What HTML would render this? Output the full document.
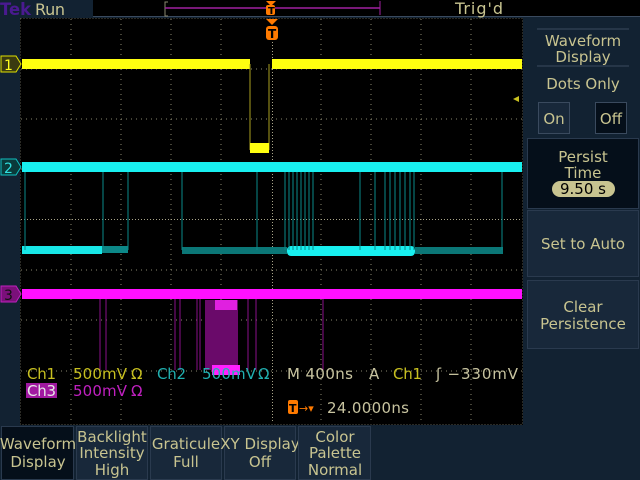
<!DOCTYPE html>
<html><head><style>
body{margin:0;width:640px;height:480px;background:#122232;overflow:hidden;font-family:"DejaVu Sans","Liberation Sans",sans-serif;}
svg{position:absolute;left:0;top:0}
.t{font-family:"DejaVu Sans","Liberation Sans",sans-serif;}
</style></head><body>
<svg width="640" height="480" viewBox="0 0 640 480">
<rect x="93" y="0" width="547" height="16" fill="#000"/>
<line x1="93" y1="16.5" x2="640" y2="16.5" stroke="#3a4a5e"/>
<text x="0" y="15" font-size="17" font-weight="bold" fill="#4a1a90" class="t" textLength="31" lengthAdjust="spacingAndGlyphs">Tek</text>
<text x="35" y="15" font-size="16" fill="#c8c490" class="t" textLength="30">Run</text>
<text x="455" y="14" font-size="16" fill="#c8c490" class="t" textLength="48">Trig'd</text>
<path d="M168 2 h-3 v14 h3" stroke="#8a8870" fill="none"/>
<line x1="165" y1="8" x2="380" y2="8" stroke="#a020a0" stroke-width="1.5"/>
<line x1="380" y1="1" x2="380" y2="15" stroke="#a020a0"/>
<polygon points="266,1 276,1 271,6" fill="#ff7a00"/>
<rect x="266" y="5" width="9" height="10" rx="2" fill="#ff7a00"/>
<text x="268" y="14" font-size="10" font-weight="bold" fill="#000">T</text>
<rect x="20" y="18" width="503" height="407" fill="#000"/>
<rect x="20.5" y="18.5" width="502" height="406" fill="none" stroke="#55554a" stroke-dasharray="1 2"/>
<g stroke="#8a8870" stroke-dasharray="1 4" stroke-width="1">
<line x1="71" y1="19" x2="71" y2="423"/><line x1="121" y1="19" x2="121" y2="423"/><line x1="171" y1="19" x2="171" y2="423"/><line x1="221" y1="19" x2="221" y2="423"/>
<line x1="321" y1="19" x2="321" y2="423"/><line x1="371" y1="19" x2="371" y2="423"/><line x1="421" y1="19" x2="421" y2="423"/><line x1="471" y1="19" x2="471" y2="423"/>
<line x1="21" y1="69" x2="522" y2="69"/><line x1="21" y1="119" x2="522" y2="119"/><line x1="21" y1="169" x2="522" y2="169"/>
<line x1="21" y1="270" x2="522" y2="270"/><line x1="21" y1="320" x2="522" y2="320"/><line x1="21" y1="371" x2="522" y2="371"/>
</g>
<g stroke="#a8a488" stroke-dasharray="1 2">
<line x1="272.5" y1="30" x2="272.5" y2="423"/><line x1="21" y1="219.5" x2="522" y2="219.5"/>
</g>
<polygon points="266,19 278,19 272,25" fill="#ff7a00"/>
<rect x="266" y="26" width="12" height="14" rx="3" fill="#ff7a00"/>
<text x="268" y="38" font-size="12" font-weight="bold" fill="#000">T</text>
<rect x="22" y="59" width="228" height="10" fill="#ffff10"/>
<rect x="272" y="59" width="250" height="10" fill="#ffff10"/>
<line x1="250" y1="64" x2="250" y2="150" stroke="#aaa020"/>
<line x1="269" y1="64" x2="269" y2="150" stroke="#aaa020"/>
<rect x="250" y="143" width="19" height="10" fill="#ffff10"/>
<rect x="22" y="162" width="500" height="10" fill="#18f0f0"/>
<rect x="22" y="246" width="80" height="8" fill="#18e8e8"/>
<rect x="102" y="246" width="26" height="7" fill="#0c8888"/>
<rect x="182" y="247" width="105" height="7" fill="#0b7777"/>
<rect x="287" y="246" width="128" height="10" rx="4" fill="#18f0f0"/>
<rect x="415" y="247" width="88" height="7" fill="#0b7777"/>
<g stroke="#0a8a8a" stroke-width="1">
<line x1="25" y1="172" x2="25" y2="250"/><line x1="103" y1="172" x2="103" y2="250"/><line x1="128" y1="172" x2="128" y2="250"/><line x1="182" y1="172" x2="182" y2="250"/><line x1="257" y1="172" x2="257" y2="250"/><line x1="502" y1="172" x2="502" y2="250"/>
<line x1="285" y1="172" x2="285" y2="250"/><line x1="289" y1="172" x2="289" y2="250"/><line x1="293" y1="172" x2="293" y2="250"/><line x1="297" y1="172" x2="297" y2="250"/><line x1="301" y1="172" x2="301" y2="250"/><line x1="305" y1="172" x2="305" y2="250"/><line x1="309" y1="172" x2="309" y2="250"/><line x1="313" y1="172" x2="313" y2="250"/>
<line x1="360" y1="172" x2="360" y2="250"/><line x1="375" y1="172" x2="375" y2="250"/><line x1="385" y1="172" x2="385" y2="250"/><line x1="390" y1="172" x2="390" y2="250"/><line x1="395" y1="172" x2="395" y2="250"/><line x1="400" y1="172" x2="400" y2="250"/><line x1="405" y1="172" x2="405" y2="250"/><line x1="410" y1="172" x2="410" y2="250"/><line x1="414" y1="172" x2="414" y2="250"/>
</g>
<rect x="22" y="289" width="500" height="10" fill="#ff10ff"/>
<g stroke="#8a108a">
<line x1="100" y1="299" x2="100" y2="370"/><line x1="106" y1="299" x2="106" y2="370"/><line x1="175" y1="299" x2="175" y2="370"/><line x1="180" y1="299" x2="180" y2="370"/><line x1="197" y1="299" x2="197" y2="370"/><line x1="200" y1="299" x2="200" y2="370"/><line x1="248" y1="299" x2="248" y2="370"/><line x1="256" y1="299" x2="256" y2="370"/><line x1="323" y1="299" x2="323" y2="370"/>
</g>
<rect x="205" y="300" width="33" height="70" fill="#6a0a6a"/>
<rect x="215" y="300" width="22" height="10" fill="#e020e0"/>
<rect x="212" y="365" width="28" height="10" fill="#ff20ff"/>
<path d="M1 56 h15 l5 8 l-5 8 h-15z" fill="#3a3a10" stroke="#e0e000"/>
<text x="4" y="70" font-size="14" fill="#ffff20">1</text>
<path d="M1 159 h15 l5 8 l-5 8 h-15z" fill="#0a3a3a" stroke="#10c0c0"/>
<text x="4" y="173" font-size="14" fill="#30e0e0">2</text>
<path d="M1 286 h15 l5 8 l-5 8 h-15z" fill="#7a107a" stroke="#c020c0"/>
<text x="4" y="300" font-size="14" fill="#101010">3</text>
<g font-size="15" class="t">
<text x="27" y="379" fill="#c8c020" textLength="29">Ch1</text><text x="73" y="379" fill="#c8c020" textLength="54">500mV</text><text x="131" y="379" fill="#c8c020">Ω</text>
<text x="157" y="379" fill="#20b0b0" textLength="29">Ch2</text><text x="202" y="379" fill="#20b0b0" textLength="54">500mV</text><text x="258" y="379" fill="#20b0b0">Ω</text>
<text x="287" y="379" fill="#c8c4a0" textLength="66">M 400ns</text><text x="369" y="379" fill="#c8c4a0">A</text><text x="393" y="379" fill="#c8c020" textLength="29">Ch1</text><text x="436" y="379" fill="#c8c4a0" textLength="82">ʃ −330mV</text>
<rect x="26" y="383" width="31" height="15" fill="#a018a0"/>
<text x="27" y="396" fill="#e8e8e8" textLength="29">Ch3</text><text x="73" y="396" fill="#c020c0" textLength="54">500mV</text><text x="131" y="396" fill="#c020c0">Ω</text>
<rect x="288" y="400" width="10" height="14" rx="2" fill="#ff7a00"/>
<text x="289" y="412" font-size="11" font-weight="bold" fill="#000">T</text>
<text x="299" y="412" font-size="11" fill="#ff7a00">→▾</text>
<text x="327" y="413" fill="#c8c4a0" textLength="82">24.0000ns</text>
</g>
<g font-size="15" fill="#c8c490" class="t" text-anchor="middle">
<line x1="537" y1="29" x2="629" y2="29" stroke="#3a4a5e"/>
<text x="583" y="46">Waveform</text><text x="583" y="62">Display</text>
<line x1="537" y1="66" x2="629" y2="66" stroke="#3a4a5e"/>
<text x="583" y="89">Dots Only</text>
<polygon points="519,96 513,99 519,102" fill="#c8c020"/>
<rect x="538.5" y="102.5" width="31" height="31" fill="#18283a" stroke="#3a4a5e"/>
<text x="554" y="124">On</text>
<rect x="595.5" y="102.5" width="31" height="31" fill="#050f1a" stroke="#3a4a5e"/>
<text x="611" y="124">Off</text>
<rect x="527.5" y="138.5" width="111" height="70" fill="#050f1a" stroke="#2a3a4e"/>
<text x="583" y="162">Persist</text><text x="583" y="178">Time</text>
<rect x="552" y="181" width="63" height="16" rx="8" fill="#c8c490"/>
<text x="583" y="194" fill="#000">9.50 s</text>
<rect x="527.5" y="210.5" width="111" height="66" fill="#18283a" stroke="#2a3a4e"/>
<text x="583" y="249">Set to Auto</text>
<rect x="527.5" y="280.5" width="111" height="68" fill="#18283a" stroke="#2a3a4e"/>
<text x="583" y="312">Clear</text><text x="583" y="329">Persistence</text>
</g>
<g font-size="15" fill="#c8c490" class="t" text-anchor="middle">
<rect x="1.5" y="426.5" width="72" height="53" fill="#050f1a" stroke="#2a3a4e"/>
<text x="38" y="449">Waveform</text><text x="38" y="467">Display</text>
<rect x="76.5" y="426.5" width="71" height="53" fill="#18283a" stroke="#2a3a4e"/>
<text x="112" y="442">Backlight</text><text x="112" y="458">Intensity</text><text x="112" y="475">High</text>
<rect x="150.5" y="426.5" width="71" height="53" fill="#18283a" stroke="#2a3a4e"/>
<text x="186" y="449">Graticule</text><text x="186" y="467">Full</text>
<rect x="224.5" y="426.5" width="71" height="53" fill="#18283a" stroke="#2a3a4e"/>
<text x="260" y="449">XY Display</text><text x="260" y="467">Off</text>
<rect x="298.5" y="426.5" width="72" height="53" fill="#18283a" stroke="#2a3a4e"/>
<text x="335" y="442">Color</text><text x="335" y="458">Palette</text><text x="335" y="475">Normal</text>
</g>
</svg>
</body></html>
